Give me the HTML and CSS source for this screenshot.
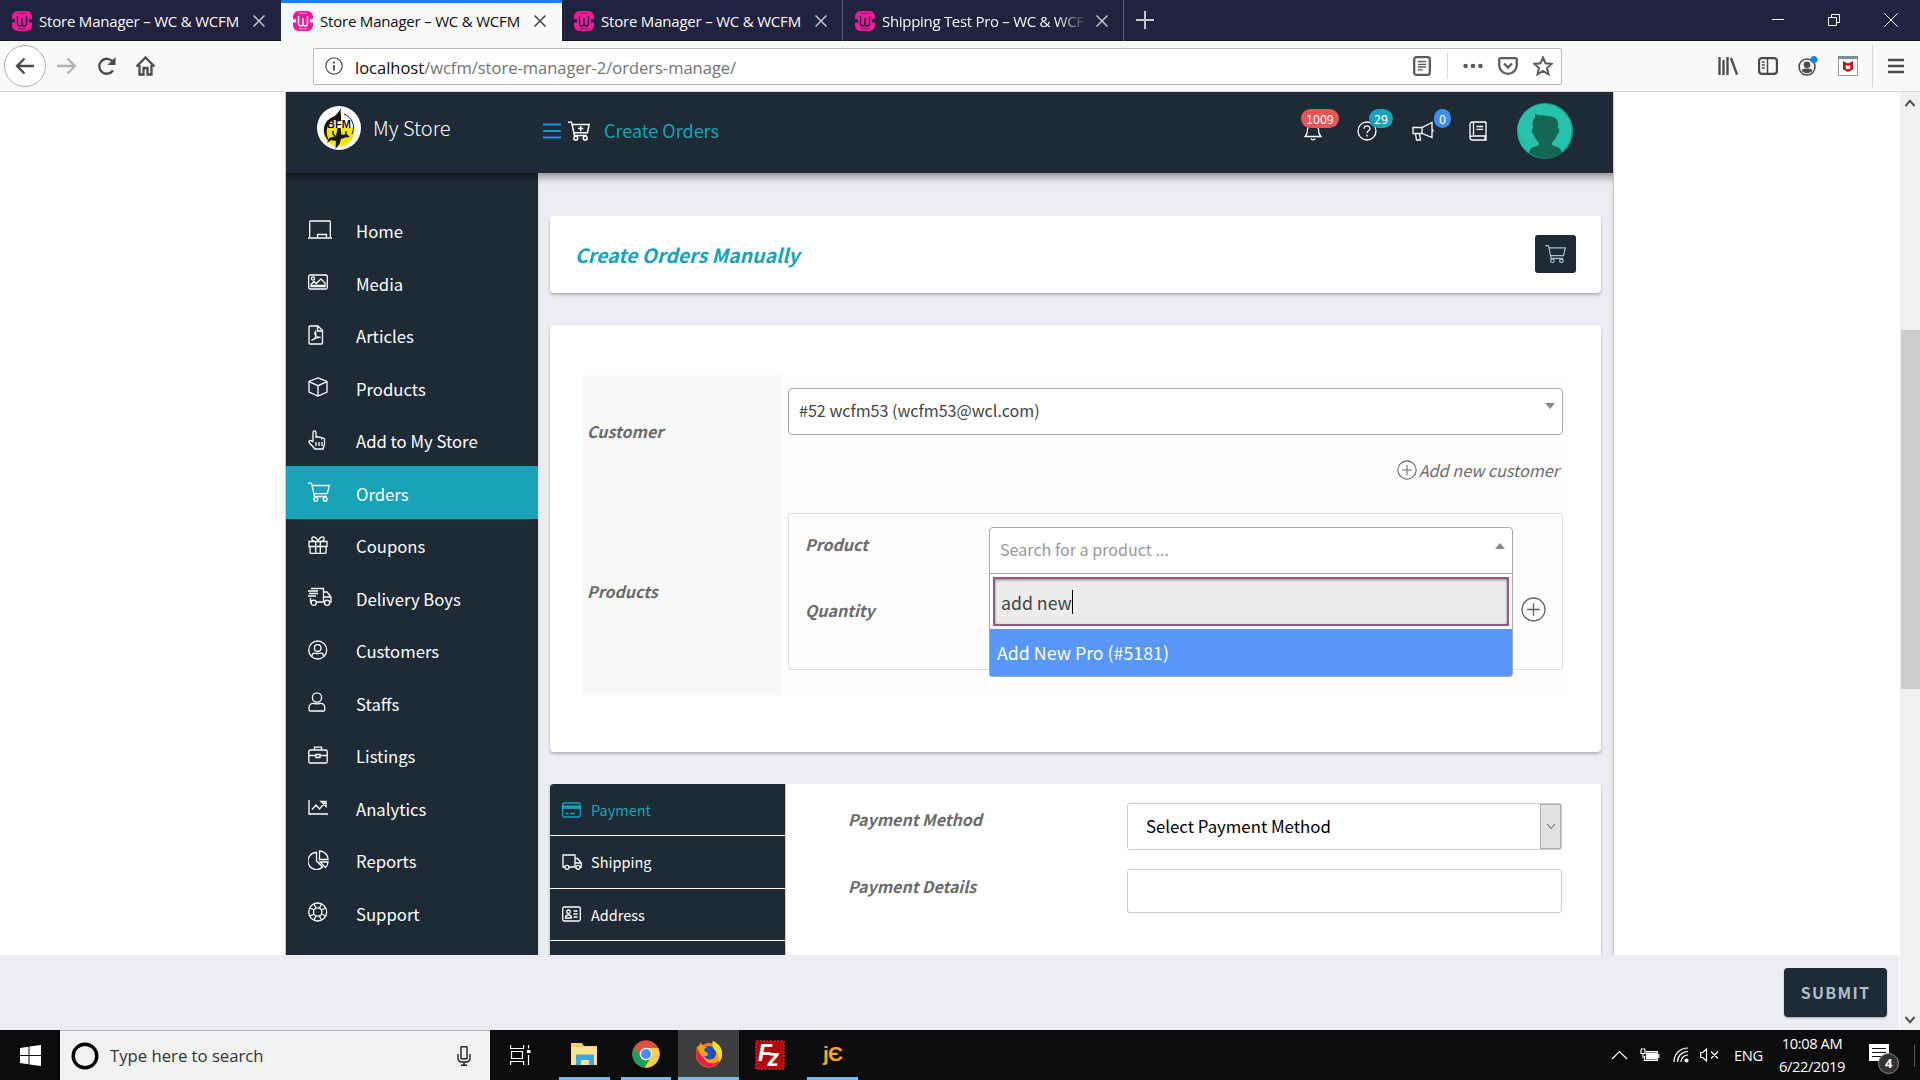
FILE: index.html
```
<!DOCTYPE html>
<html lang="en">
<head>
    <meta charset="UTF-8">
    <title>Store Manager – WC &amp; WCFM</title>
    <link rel="stylesheet" href="styles.css">
</head>
<body>
    <svg class="sprite" width="0" height="0">
        <symbol id="fav" viewBox="0 0 20 20">
            <path d="M6 0h8c4 0 6 3 6 6v2.200h-3V11.500h3V14c0 3-2 6-6 6H6c-4 0-6-3-6-6v-2.500h3V8.200H0V6c0-3 2-6 6-6z" fill="#f0189c"/>
            <path d="M5.500 5v7c0 2 1 3 2.300 3S10 14 10 12V7m0 5c0 2 1 3 2.200 3s2.300-1 2.300-3V5" fill="none" stroke="var(--tab-bg)" stroke-width="1.500"/>
            <path d="M6 2.200h8M6 17.800h8" stroke="var(--tab-bg)" stroke-width=".6"/>
        </symbol>
        <symbol id="cart" viewBox="0 0 22 20">
            <path d="M0 1.200h3.600L6.400 14.500h12.400M4.200 3.500h17L19.400 11.700H6"/>
            <circle cx="7.800" cy="17.200" r="1.900"/><circle cx="17.200" cy="17.200" r="1.900"/>
        </symbol>
        <symbol id="plus-circle" viewBox="0 0 24 24">
            <circle cx="12" cy="12" r="11"/><path d="M12 6v12M6 12h12"/>
        </symbol>
    </svg>

    <!-- browser tabs -->
    <div class="tabs">
        <div class="tab"><svg class="fav"><use href="#fav"/></svg><span class="tab-title">Store Manager – WC &amp; WCFM</span><svg class="close" viewBox="0 0 12 12"><path d="M.5.5l11 11M11.500.5l-11 11"/></svg></div>
        <div class="tab active"><svg class="fav"><use href="#fav"/></svg><span class="tab-title">Store Manager – WC &amp; WCFM</span><svg class="close" viewBox="0 0 12 12"><path d="M.5.5l11 11M11.500.5l-11 11"/></svg></div>
        <div class="tab lined"><svg class="fav"><use href="#fav"/></svg><span class="tab-title">Store Manager – WC &amp; WCFM</span><svg class="close" viewBox="0 0 12 12"><path d="M.5.5l11 11M11.500.5l-11 11"/></svg></div>
        <div class="tab lined"><svg class="fav"><use href="#fav"/></svg><span class="tab-title faded">Shipping Test Pro – WC &amp; WCF</span><svg class="close" viewBox="0 0 12 12"><path d="M.5.5l11 11M11.500.5l-11 11"/></svg></div>
        <svg class="new-tab" width="18" height="18" viewBox="0 0 18 18"><path d="M9 0v18M0 9h18"/></svg>
        <div class="win-btns">
            <svg width="12" height="12" viewBox="0 0 12 12"><path d="M0 5.500h12"/></svg>
            <svg width="12" height="12" viewBox="0 0 12 12"><path d="M.5 3.500h8v8h-8zM3.500 3.500v-3h8v8h-3"/></svg>
            <svg width="14" height="14" viewBox="0 0 14 14"><path d="M.5.5l13 13M13.500.5l-13 13"/></svg>
        </div>
    </div>

    <!-- browser toolbar -->
    <div class="toolbar">
        <div class="back"><svg width="20" height="18" viewBox="0 0 20 18"><path d="M19 9H2M9.500 1.500L2 9l7.500 7.500"/></svg></div>
        <svg class="nav-ic forward" width="21" height="18" viewBox="0 0 21 18"><path d="M1 9h17M11.500 1.500L19 9l-7.500 7.500"/></svg>
        <svg class="nav-ic reload" width="20" height="19" viewBox="0 0 20 19"><path d="M16 13.500A7.500 7.500 0 1 1 16 5"/><path d="M18.500 0v8h-8z" fill="#4b4b4f" stroke="none"/></svg>
        <svg class="nav-ic home" width="21" height="20" viewBox="0 0 21 20"><path d="M1.500 10.500l9-9 9 9M4.500 9v9.500h4V12h4v6.500h4V9"/></svg>
        <div class="urlbar">
            <svg class="info" width="18" height="18" viewBox="0 0 18 18"><circle cx="9" cy="9" r="8.200"/><path d="M9 8v5.500M9 4.500v2" stroke-width="2"/></svg>
            <span class="url"><b>localhost</b>/wcfm/store-manager-2/orders-manage/</span>
            <svg width="18" height="20" viewBox="0 0 18 20"><rect x="1.200" y="1.200" width="15.600" height="17.600" rx="2"/><path d="M5 5.500h8M5 8.300h8M5 11h8M5 13.800h5" stroke-width="1.300"/></svg>
            <i class="url-sep"></i>
            <svg class="dots" width="20" height="6" viewBox="0 0 20 6"><circle cx="2.600" cy="3" r="2.300"/><circle cx="10" cy="3" r="2.300"/><circle cx="17.400" cy="3" r="2.300"/></svg>
            <svg class="pocket" width="20" height="18" viewBox="0 0 20 18"><path d="M2.500 1.200h15q1.300 0 1.300 1.300V8c0 5-4 8.800-8.800 8.800S1.200 13 1.200 8V2.500q0-1.300 1.300-1.300zM6 6.500l4 4 4-4"/></svg>
            <svg class="star" width="20" height="20" viewBox="0 0 20 20"><path d="M10 1.500l2.500 5.800 6.200.6-4.700 4.100 1.500 6.300L10 15l-5.500 3.300L6 12 1.300 7.900l6.200-.6z"/></svg>
        </div>
        <div class="tools">
            <svg width="20" height="18" viewBox="0 0 20 18"><path d="M1.500 0v18M5.500 3v15M9.500 0v18M13 1l6 16.500"/></svg>
            <svg width="20" height="18" viewBox="0 0 20 18"><rect x="1" y="1.200" width="18" height="15.600" rx="3"/><path d="M9.500 1v16M3.800 5h3M3.800 8h3M3.800 11h3" stroke-width="1.500"/></svg>
            <svg class="account" width="20" height="20" viewBox="0 0 20 20"><circle cx="9" cy="11" r="8" stroke-width="1.500"/><circle cx="9" cy="8.700" r="3.300" fill="#4b4b4f" stroke="none"/><path d="M3.500 14.500c1-1.500 3-2 5.500-2s4.500.5 5.500 2c-3 3.500-8 3.500-11 0z" fill="#4b4b4f" stroke="none"/><circle cx="16" cy="3.500" r="3.500" fill="#0a84ff" stroke="none"/></svg>
            <svg width="20" height="20" viewBox="0 0 20 20"><rect x=".5" y=".5" width="19" height="19" fill="#fff" stroke="#9a9a9a" stroke-width="1"/><path d="M0 1.500h20" stroke="#78909c" stroke-width="3"/><path d="M5 5l5 2.500L15 5v8.500L10 16l-5-2.500z" fill="#c01818" stroke="none"/><path d="M7.800 9v3.500l2.200 1 2.200-1V9L10 10z" fill="#fff" stroke="none"/></svg>
            <i class="tool-sep"></i>
            <svg class="menu-btn" width="16" height="16" viewBox="0 0 16 16"><path d="M0 2h16M0 8h16M0 14h16"/></svg>
        </div>
    </div>

    <div class="viewport">
        <div class="page">
            <div class="frame">
                <header class="store-head">
                    <div class="brand">
                        <svg width="44" height="44" viewBox="0 0 44 44"><circle cx="22" cy="22" r="22" fill="#fff"/><circle cx="22" cy="25" r="15.500" fill="#f4e800"/><path d="M6.500 21.500a15.500 15 0 0 1 31 0z" fill="#fff"/><path d="M13 36C4 29 5 15 16 11c4-2 5-5 9-10-3 5 0 7-1 13h-5c-9 0-12 13-6 22z" fill="#1c1410"/><path d="M27 8c8 3 12 12 8 20" fill="none" stroke="#1c1410"/><path d="M20.500 22h3l1 7 5-1 3.500 3-5 .5-4 1.500-1.500 5-4 5 .5-8-5-1-4 3 2-5 7-2z" fill="#1c1410"/><path d="M16 25v3l3 3M29 25v4l-4 3" stroke="#1c1410" stroke-width="1.500" fill="none"/><text class="logo-text" x="22" y="22" text-anchor="middle">BFM</text></svg>
                        <span>My Store</span>
                    </div>
                    <div class="crumb">
                        <svg class="burger" width="18" height="16" viewBox="0 0 18 16"><path d="M0 1.500h18M0 8h18M0 14.500h18"/></svg>
                        <svg class="cart-plus ln" width="22" height="20" viewBox="0 0 22 20"><use href="#cart"/><path d="M12.700 5v5.200M10 7.600h5.400"/></svg>
                        <span>Create Orders</span>
                    </div>
                    <div class="head-icons">
                        <div class="hi bell"><svg class="ln" width="18" height="20" viewBox="0 0 18 20"><path d="M1.200 15.500c2-2 2.300-3 2.300-7a5.500 5.500 0 0 1 11 0c0 4 .3 5 2.300 7zM7 17.500c.6 1.800 3.400 1.800 4 0M9 1v2"/></svg><b class="badge red">1009</b></div>
                        <div class="hi help"><svg class="ln" width="20" height="20" viewBox="0 0 20 20"><circle cx="10" cy="10" r="9"/><path d="M7 7.800c0-4 6.200-3.600 6 0-.1 2-3 2-3 4.200M10 13.500v2"/></svg><b class="badge teal">29</b></div>
                        <div class="hi horn"><svg class="ln" width="22" height="20" viewBox="0 0 22 20"><path d="M1 6.500h9l10-5v15l-10-4H1zM10 6.500v6M3.500 12.500l1 6.500h4l-1-6.500M20 8c1.500.5 1.500 2.500 0 3"/></svg><b class="badge blue">0</b></div>
                        <div class="hi book"><svg class="ln" width="18" height="20" viewBox="0 0 18 20"><path d="M17 1H3.500Q1 1 1 3.500v13Q1 19 3.500 19H17v-4H3.500Q1 15 1 17M17 1v14M4.500 1v14M7.500 5.500h6.500M7.500 8.300h6.500M16 15v4"/></svg></div>
                        <svg class="avatar" width="56" height="56" viewBox="0 0 56 56"><circle cx="28" cy="28" r="28" fill="#1f9d8b"/><circle cx="27.500" cy="28" r="27" fill="#27c1ac"/><path d="M18 10c1 4 14 1 20 5 4 3 3 7 3 10 2 1 1 6-1 7-1 5-5 6-5 9 0 2 4 2 7 4 2 1 3 4 3 5a28 28 0 0 1-33 0c0-1 1-4 3-5 3-2 7-2 7-4 0-3-4-4-5-9-2-1-3-6-1-7-1-6 0-8 2-10z" fill="#166655"/></svg>
                    </div>
                </header>

                <div class="columns">
                    <nav class="side">
                        <a><svg class="ln" width="24" height="20" viewBox="0 0 24 20"><path d="M1.700 17V1.800q0-.8.8-.8h19q.8 0 .8.800V17M0 18h24M9.500 18v-3.500h9V18"/></svg>Home</a>
                        <a><svg class="ln" width="24" height="20" viewBox="0 0 24 20"><rect x=".7" y="3" width="18.600" height="14" rx="1.500"/><circle cx="5" cy="6.500" r="1.600"/><path d="M3 14.500v-2l3-3 2.200 2L13 7l4 4v3.500zM3 13.500h14"/></svg>Media</a>
                        <a><svg class="ln" width="24" height="20" viewBox="0 0 24 20"><path d="M1 2q0-1 1-1h8l4.500 4.500V18q0 1-1 1H2q-1 0-1-1zM9.500 1v5h5M3.500 15.500c4-2 5-6 4-9-2 3 1 6 5 6-3-.5-6 1-9 3z"/></svg>Articles</a>
                        <a><svg class="ln" width="24" height="20" viewBox="0 0 24 20"><path d="M10 .9l9 3.600v10.500l-9 4-9-4V4.500zM1 4.700l9 4 9-4M10 8.700V19"/></svg>Products</a>
                        <a><svg class="ln" width="24" height="20" viewBox="0 0 24 20"><path d="M5 12V2.400c0-2 3-2 3 0V8c0-1.800 3-1.500 3 0 0-1.500 2.800-1 2.800.5 1-1 2.700-.5 2.700 1V14l-1.500 5H7l-5.500-6c-1.500-2 1-3.500 2-2L5 12M8 12v4M11 12v4M14 12v4"/></svg>Add to My Store</a>
                        <a class="on"><svg class="ln" width="24" height="20" viewBox="0 0 24 20"><use href="#cart" width="22" height="20"/></svg>Orders</a>
                        <a><svg class="ln" width="24" height="20" viewBox="0 0 24 20"><path d="M1 6.500h18v5H1zM2 11.500h16v6q0 .8-.8.800H2.800q-.8 0-.8-.8zM7.700 6.500v11.800M12.300 6.500v11.800M10 6C7 0 3 1.500 4 4.500c.3 1.500 2 2 3 2M10 6c3-6 7-4.500 6-1.500-.3 1.500-2 2-3 2"/></svg>Coupons</a>
                        <a><svg class="ln" width="24" height="20" viewBox="0 0 24 20"><path d="M3 1.500h12.500V15H8M2.500 11v4h1M0 4h10M1 6.500h9M0 9h8M15.500 5h3.500l4 5v5h-2M15.500 15h2M16 10h7"/><circle cx="5.700" cy="15.700" r="2.600"/><circle cx="19" cy="15.700" r="2.600"/></svg>Delivery Boys</a>
                        <a><svg class="ln" width="24" height="20" viewBox="0 0 24 20"><circle cx="9.700" cy="10" r="9"/><circle cx="9.700" cy="8" r="3.300"/><path d="M4 16.500c0-5 3-3 5.700-3s5.700-2 5.700 3"/></svg>Customers</a>
                        <a><svg class="ln" width="24" height="20" viewBox="0 0 24 20"><circle cx="9" cy="5.500" r="4.600"/><path d="M2.500 19h13q1.300 0 1.300-1.300V16c0-4-3-5-5-4.500-2 .5-3 .5-5.300 0C4 11 1 12 1 16v1.700Q1 19 2.500 19z"/></svg>Staffs</a>
                        <a><svg class="ln" width="24" height="20" viewBox="0 0 24 20"><rect x=".8" y="5" width="18.400" height="13" rx="1.500"/><path d="M6.500 5V2.200h7V5M1 10.500h7M12 10.500h7M8 9.500h4v3H8z"/></svg>Listings</a>
                        <a><svg class="ln" width="24" height="20" viewBox="0 0 24 20"><path d="M1 3v14h19M4 12.500L8 8l3.500 4L17 5.500M13 4.500h5v5z"/></svg>Analytics</a>
                        <a><svg class="ln" width="24" height="20" viewBox="0 0 24 20"><path d="M8.500 2.500a8.500 8.500 0 1 0 6 14.500L8.500 11zM11.500 1v8.500H20C20 5 16.500 1 11.500 1zM12 12h8c0 2-1 4-2.500 5.500z"/></svg>Reports</a>
                        <a><svg class="ln" width="24" height="20" viewBox="0 0 24 20"><circle cx="9.700" cy="10" r="9"/><circle cx="9.700" cy="10" r="4.200"/><path d="M2 6l4 2M6 2l2 4M17.500 6l-4 2M13.500 2l-2 4M2 14l4-2M6 18l2-4M17.500 14l-4-2M13.500 18l-2-4"/></svg>Support</a>
                    </nav>

                    <main class="content">
                        <section class="card title-card">
                            <h2>Create Orders Manually</h2>
                            <a class="cart-btn"><svg class="ln" width="21" height="20" viewBox="0 0 22 20"><use href="#cart"/></svg></a>
                        </section>

                        <section class="card order-card">
                            <div class="grid">
                                <div class="label">Customer</div>
                                <div class="cell customer">
                                    <div class="select2"><span>#52 wcfm53 (wcfm53@wcl.com)</span><i class="caret down"></i></div>
                                    <div class="add-new"><svg class="ln" width="20" height="20"><use href="#plus-circle"/></svg><span>Add new customer</span></div>
                                </div>
                                <div class="label">Products</div>
                                <div class="cell">
                                    <div class="multi">
                                        <div class="multi-labels"><span>Product</span><span>Quantity</span></div>
                                        <div class="picker">
                                            <div class="select2 open"><span class="ph">Search for a product ...</span><i class="caret up"></i></div>
                                            <div class="dropdown">
                                                <div class="search"><span>add new</span><i class="cursor"></i></div>
                                                <div class="option">Add New Pro (#5181)</div>
                                            </div>
                                        </div>
                                        <svg class="add-row ln" width="25" height="25"><use href="#plus-circle"/></svg>
                                    </div>
                                </div>
                            </div>
                        </section>

                        <section class="card pay-card">
                            <div class="vtabs">
                                <a class="cur"><svg class="ln" width="20" height="16" viewBox="0 0 20 16"><rect x=".7" y="1" width="17.600" height="14" rx="1.500"/><path d="M1 5.200h17" stroke-width="3.500"/><path d="M3.500 11.500h3M8 11.500h5"/></svg>Payment</a>
                                <a><svg class="ln" width="20" height="16" viewBox="0 0 20 16"><path d="M3 13H1V1h12v12H7M13 4.500h2.500L19.300 9v4H18M13 9h6"/><circle cx="5" cy="13.300" r="2"/><circle cx="16" cy="13.300" r="2"/></svg>Shipping</a>
                                <a><svg class="ln" width="20" height="16" viewBox="0 0 20 16"><rect x=".7" y="1" width="17.600" height="14" rx="1.500"/><circle cx="6.500" cy="5.800" r="1.800"/><path d="M3.500 12c0-4 6-4 6 0zM11.500 5h4M11.500 8h4M11.500 11h4"/></svg>Address</a>
                                <a></a>
                            </div>
                            <div class="pay-form">
                                <div class="row"><label>Payment Method</label><div class="native"><span>Select Payment Method</span><i><svg width="10" height="7" viewBox="0 0 10 7"><path d="M1 1l4 4.500L9 1"/></svg></i></div></div>
                                <div class="row second"><label>Payment Details</label><div class="input"></div></div>
                            </div>
                        </section>
                    </main>
                </div>
            </div>
            <div class="submit-bar"><button class="submit">SUBMIT</button></div>
        </div>
        <div class="scrollbar">
            <svg width="12" height="8" viewBox="0 0 12 8"><path d="M1.500 7L6 1.800 10.500 7"/></svg>
            <div class="track"><div class="thumb"></div></div>
            <svg width="12" height="8" viewBox="0 0 12 8"><path d="M1.500 1L6 6.200 10.500 1"/></svg>
        </div>
    </div>

    <!-- windows taskbar -->
    <div class="taskbar">
        <div class="start"><svg width="21" height="21" viewBox="0 0 21 21" fill="#fff"><path d="M0 3l8.500-1.200V10H0zM9.500 1.600L21 0v10H9.500zM0 11h8.500v8.200L0 18zM9.500 11H21v10L9.500 19.400z"/></svg></div>
        <div class="win-search">
            <svg width="28" height="28" viewBox="0 0 28 28"><circle cx="14" cy="14" r="11.800" fill="none" stroke="#000" stroke-width="3.400"/></svg>
            <span>Type here to search</span>
            <svg class="mic" width="14" height="20" viewBox="0 0 14 20" fill="none" stroke="#222" stroke-width="1.400"><rect x="4" y=".8" width="6" height="12" rx=".5"/><path d="M1 8v4q0 4 4 4h4q4 0 4-4V8M7 16v3.300M4 19.300h6"/></svg>
        </div>
        <div class="app taskview"><svg width="21" height="20" viewBox="0 0 21 20" fill="none" stroke="#fff" stroke-width="1.200"><path d="M.6 0v3.500h13V0M.6 20v-3.500h13V20M1.500 6.500h11v7h-11zM18.500 0v3.500M18.500 10v10"/><path d="M17 6.500h3.500" stroke-width="3"/></svg></div>
        <div class="app folder run"><svg width="28" height="24" viewBox="0 0 28 24"><path d="M1 1h11l2 3h13v19H1z" fill="#f5cf62"/><path d="M1 5h26v18H1z" fill="#ffe391"/><path d="M6 23V12.500h18V23h-5v-5h-8v5z" fill="#3aa8e6"/></svg></div>
        <div class="app chrome run"><svg width="28" height="28" viewBox="0 0 28 28"><circle cx="14" cy="14" r="13.700" fill="#dd4f41"/><path d="M2.200 7A13.700 13.700 0 0 0 12.700 27.600L20 17 8 17z" fill="#1a9f5a"/><path d="M26.200 8A13.700 13.700 0 0 1 12.500 27.600L20 16 14 8z" fill="#fdce46"/><circle cx="14" cy="14" r="6.300" fill="#f4f4f4"/><circle cx="14" cy="14" r="5" fill="#4c8af5"/></svg></div>
        <div class="app firefox run"><svg width="28" height="28" viewBox="0 0 28 28"><circle cx="14" cy="15" r="12" fill="#ff7a18"/><circle cx="14" cy="13.500" r="7.500" fill="#1c4fbf"/><path d="M2 7c2-1 3-3 4-5 0 3 3 4 6 6-3 0-4 2-1 4 4 1 2 5-2 4 4 6 13 4 12-4C20 8 16 6 18 1c6 3 9 7 9 13a13 13 0 0 1-26 1C1 11 2 9 2 7z" fill="#ff9e13"/><path d="M1 14a13 13 0 0 0 25 5c-5 6-14 6-18-2C5 15 3 12 3 8c-1 2-2 4-2 6z" fill="#e91e50"/><path d="M18 1c6 3 9 7 9 13 0 3-1 6-3 8 0-7-2-10-5-13-2-3-2-5-1-8z" fill="#ffdf2c"/></svg></div>
        <div class="app fz"><svg width="30" height="30" viewBox="0 0 30 30"><rect x="1" y="1" width="28" height="28" fill="#b20a0a" stroke="#c51a1a" stroke-dasharray="2 1.500" stroke-width="2"/><text x="3" y="21" class="fz-text">F</text><text x="12.500" y="26" class="fz-text">z</text></svg></div>
        <div class="app je run"><span>jЄ</span></div>
        <div class="tray">
            <svg class="chev" width="17" height="10" viewBox="0 0 17 10"><path d="M1 9l7.500-7.500L16 9"/></svg>
            <svg class="batt" width="20" height="14" viewBox="0 0 20 14"><path d="M6 3.500h11.500v9H4.500V8" /><path d="M6.500 5h10v6h-10z" fill="#fff"/><path d="M18.800 6v4M1 1.500v4h4v-4M3 5.500V10M1.800 0v2M4.200 0v2"/></svg>
            <svg class="wifi" width="16" height="16" viewBox="0 0 16 16"><path d="M1 15C1 7 7 1 15 1M4.500 15C4.500 9 9 4.500 15 4.500M8 15c0-4 3-7 7-7"/><circle cx="13.500" cy="13.500" r="1.500" fill="#fff"/></svg>
            <svg class="vol" width="19" height="14" viewBox="0 0 19 14"><path d="M.7 4.500h2L6.500 1v12L2.700 9.500h-2zM11 3.500l7 7M18 3.500l-7 7"/></svg>
            <span class="lang">ENG</span>
            <div class="clock"><span>10:08 AM</span><span>6/22/2019</span></div>
            <div class="notif"><svg width="21" height="19" viewBox="0 0 21 19"><path d="M0 0h20v17h-6l-3 2v-2H0z" fill="#fff" stroke="none"/><path d="M3 4.500h14M3 8.500h14M3 12.500h9" stroke="#111"/></svg><b>4</b></div>
        </div>
    </div>
</body>
</html>
```

FILE: styles.css
```
:root {
    --dark: #1e2a35;
    --teal: #18a3b9;
    --bg: #ecedf2;
    --source: "Noto Sans CJK SC", "Noto Sans", sans-serif;
    --ui: "Open Sans", "Noto Sans", sans-serif;
}
* {
    box-sizing: border-box;
}
body {
    margin: 0;
    width: 1920px;
    height: 1080px;
    overflow: hidden;
    background: #fff;
    font-family: var(--source);
    display: flex;
    flex-direction: column;
}
svg {
    display: block;
    flex: none;
}
.sprite {
    position: absolute;
}
.ln {
    fill: none;
    stroke: currentColor;
    stroke-width: 1.3;
}

/* tabs */
.tabs {
    height: 41px;
    flex: none;
    display: flex;
    align-items: center;
    background: #20223f;
    border-bottom: 1px solid #15162e;
    font-family: var(--ui);
}
.tab {
    --tab-bg: #20223f;
    width: 281px;
    height: 41px;
    padding: 2px 15px 0 12px;
    display: flex;
    align-items: center;
    color: #f9f9fa;
    font-size: 15px;
}
.tab.active {
    --tab-bg: #f9f9fa;
    background: #f9f9fa;
    color: #0c0c0d;
    border-top: 3px solid #0a84ff;
    padding-top: 0;
    padding-bottom: 1px;
}
.tab.lined {
    border-right: 1px solid #5b5c73;
}
.fav {
    width: 20px;
    height: 20px;
    margin-right: 7px;
}
.tab-title {
    width: 206px;
    overflow: hidden;
    white-space: nowrap;
    letter-spacing: -0.200px;
    margin-right: 8px;
}
.tab-title.faded {
    letter-spacing: -0.300px;
    -webkit-mask-image: linear-gradient(90deg, #000 85%, transparent 100%);
    mask-image: linear-gradient(90deg, #000 85%, transparent 100%);
}
.close {
    width: 12px;
    height: 12px;
    stroke: #c6c6cf;
    stroke-width: 1.500;
}
.active .close {
    stroke: #444;
}
.new-tab {
    margin-left: 12px;
    stroke: #c6c6cf;
    stroke-width: 2;
}
.win-btns {
    margin-left: auto;
    margin-right: 22px;
    display: flex;
    align-items: center;
    gap: 44px;
    fill: none;
    stroke: #fff;
}

/* toolbar */
.toolbar {
    height: 51px;
    flex: none;
    display: flex;
    align-items: center;
    padding-left: 4px;
    background: #f9f9fa;
    border-bottom: 1px solid #d7d7db;
    fill: none;
    stroke: #4b4b4f;
    stroke-width: 2.300;
}
.back {
    width: 42px;
    height: 42px;
    border: 1px solid #b1b1b3;
    border-radius: 50%;
    background: #fff;
    display: flex;
    align-items: center;
    justify-content: center;
}
.forward {
    margin-left: 10px;
    opacity: .4;
}
.reload {
    margin-left: 20px;
}
.home {
    margin-left: 18px;
}
.urlbar {
    margin-left: 157px;
    width: 1249px;
    height: 37px;
    background: #fff;
    border: 1px solid #bcbcbc;
    border-radius: 2px;
    display: flex;
    align-items: center;
    padding: 0 8px 0 11px;
    font-family: var(--ui);
    font-size: 16.500px;
    stroke: #5b5b5f;
}
.info {
    stroke-width: 1.300;
}
.url {
    margin-left: 12px;
    margin-right: auto;
    padding-top: 2px;
    color: #737373;
}
.url b {
    font-weight: 400;
    color: #0c0c0d;
}
.url-sep {
    width: 1px;
    height: 26px;
    margin: 0 15px 0 16px;
    background: #d7d7db;
}
.dots {
    fill: #5b5b5f;
    stroke: none;
}
.pocket {
    margin-left: 15px;
}
.star {
    margin-left: 15px;
    stroke-width: 2;
}
.tools {
    margin-left: auto;
    display: flex;
    align-items: center;
    gap: 20px;
    padding-right: 16px;
}
.tool-sep {
    width: 1px;
    height: 42px;
    background: #d7d7db;
    margin: 0 -5px 0 -6px;
}
.menu-btn {
    stroke-width: 2.500;
}

/* page */
.viewport {
    height: 938px;
    flex: none;
    display: flex;
}
.page {
    width: 1900px;
    border-right: 1px solid #fff;
    display: flex;
    flex-direction: column;
}
.frame {
    width: 1329px;
    height: 863px;
    flex: none;
    overflow: hidden;
    margin-left: 285px;
    border: 1px solid #c9c9cd;
    border-width: 0 1px;
    background: var(--bg);
}
.store-head {
    height: 81px;
    position: relative;
    background: var(--dark);
    display: flex;
    color: #fff;
}
.brand {
    width: 257px;
    padding: 14px 0 0 31px;
    display: flex;
    gap: 12px;
    font-size: 20px;
    font-weight: 300;
    line-height: 44px;
}
.logo-text {
    font: bold 11px "Liberation Sans", sans-serif;
    fill: #1c1410;
}
.crumb {
    display: flex;
    height: 77px;
    align-items: center;
    font-size: 18px;
    color: var(--teal);
}
.crumb span {
    line-height: 24px;
    margin-top: -1px;
}
.burger {
    stroke: #0d9be0;
    stroke-width: 2;
}
.cart-plus {
    margin: 0 14px 0 7px;
    color: #fff;
    stroke-width: 1.500;
}
.head-icons {
    margin-left: auto;
    display: flex;
    align-items: center;
    height: 78px;
    padding-right: 40px;
}
.hi {
    position: relative;
}
.bell { margin-right: 35px; }
.help { margin-right: 35px; }
.horn { margin-right: 35px; }
.book { margin-right: 30px; }
.badge {
    position: absolute;
    top: -12px;
    height: 19px;
    border-radius: 10px;
    padding: 0 5px;
    font-weight: 400;
    font-size: 12.500px;
    line-height: 19px;
}
.badge.red { left: -3px; background: #e85656; }
.badge.teal { left: 12px; background: #18a3b9; }
.badge.blue { left: 22px; background: #3f8ff0; }

.columns {
    display: flex;
    height: 782px;
}
.side {
    width: 252px;
    padding-top: 30.500px;
    background: var(--dark);
    color: #fff;
    box-shadow: inset 0 9px 9px -7px rgba(0, 0, 0, .6);
}
.side a {
    display: flex;
    align-items: center;
    gap: 24px;
    height: 52.500px;
    padding: 3px 0 0 22px;
    font-size: 16.700px;
}
.side svg {
    margin-top: -3px;
}
.side a.on {
    background: var(--teal);
}
.content {
    flex: 1;
    padding: 43px 12px 0;
    box-shadow: inset 0 9px 9px -5px rgba(0, 0, 0, .4);
}
.card {
    width: 1051px;
    background: #fff;
    border-radius: 4px;
    box-shadow: 0 2px 3px rgba(0, 0, 0, .25);
}
.title-card {
    height: 77px;
    margin-bottom: 32px;
    padding: 0 25px 2px 25px;
    display: flex;
    align-items: center;
    justify-content: space-between;
}
h2 {
    margin: 2px 0 0;
    font-size: 19.500px;
    font-style: italic;
    font-weight: 600;
    color: var(--teal);
}
.cart-btn {
    width: 41px;
    height: 38px;
    display: flex;
    align-items: center;
    justify-content: center;
    background: var(--dark);
    color: #b0bec5;
    border-radius: 3px;
}
.order-card {
    height: 427px;
    margin-bottom: 32px;
    padding: 50px 32px 0 32px;
}
.grid {
    display: grid;
    grid-template-columns: 200px 1fr;
    grid-template-rows: 114px 206px;
    background: #fdfdfd;
}
.label {
    display: flex;
    align-items: center;
    padding: 0 0 2px 5px;
    background: #f8f8f8;
}
.label, .multi-labels, .pay-form label {
    font-size: 16px;
    font-style: italic;
    font-weight: 600;
    color: #6b6b6b;
}
.cell {
    padding: 13px 7px 0 6px;
}
.select2 {
    height: 47px;
    border: 1px solid #aaa;
    border-radius: 4px;
    background: #fff;
    display: flex;
    justify-content: space-between;
    padding: 0 7px 4px 10px;
    align-items: center;
    font-size: 16.100px;
    color: #444;
}
.select2 .ph {
    color: #999;
    margin-top: 1px;
}
.caret {
    border: 5px solid transparent;
    border-width: 0 5px;
}
.caret.down {
    border-top: 6px solid #888;
    margin-top: -7px;
}
.caret.up {
    border-bottom: 6px solid #888;
    margin-top: -6px;
}
.add-new {
    display: flex;
    justify-content: flex-end;
    align-items: center;
    gap: 2px;
    margin-top: 23px;
    padding-right: 4px;
    height: 24px;
    font-size: 16.200px;
    font-style: italic;
    color: #6b6b6b;
}
.multi {
    display: flex;
    height: 157px;
    margin-top: 11px;
    padding: 13px 16px 0;
    border: 1px solid #ddd;
    border-radius: 3px;
}
.multi-labels {
    width: 184px;
    display: flex;
    flex-direction: column;
    gap: 42px;
    line-height: 24px;
    padding-top: 5px;
}
.picker {
    width: 524px;
    position: relative;
}
.select2.open {
    border-radius: 4px 4px 0 0;
}
.dropdown {
    position: absolute;
    top: 47px;
    left: 0;
    width: 524px;
    height: 103px;
    border: 1px solid #aaa;
    border-top: 0;
    border-radius: 0 0 4px 4px;
    background: #fff;
}
.search {
    height: 49px;
    margin: 3px 3px;
    padding: 0 6px;
    display: flex;
    align-items: center;
    border: 2px solid #96588a;
    background: #ececec;
    box-shadow: inset 0 1px 3px #888;
    font-size: 17.700px;
    color: #43454b;
}
.cursor {
    width: 1px;
    height: 24px;
    background: #000;
}
.option {
    height: 47px;
    padding-left: 7px;
    line-height: 47px;
    background: #5897fb;
    color: #fff;
    font-size: 17.800px;
}
.add-row {
    margin: 70px 0 0 8px;
    color: #666;
}
.pay-card {
    display: flex;
    height: 300px;
}
.vtabs {
    width: 236px;
    background: var(--dark);
    border-right: 1px solid #ccc;
    border-radius: 4px 0 0;
    color: #fff;
}
.vtabs a {
    display: flex;
    align-items: center;
    gap: 9px;
    height: 52.300px;
    padding-left: 12px;
    border-bottom: 1px solid #fff;
    font-size: 14.500px;
}
.vtabs .cur {
    color: var(--teal);
}
.pay-form {
    flex: 1;
    padding: 19px 39px 0 62px;
}
.row {
    display: flex;
    justify-content: space-between;
}
.row label {
    line-height: 24px;
    padding-top: 4px;
}
.row.second label {
    padding-top: 5px;
}
.second {
    margin-top: 19px;
}
.native, .input {
    width: 435px;
    height: 47px;
    border: 1px solid #ccc;
    border-radius: 3px;
}
.native {
    display: flex;
    justify-content: space-between;
    align-items: center;
    padding-left: 18px;
    font-size: 16.800px;
    color: #000;
}
.native span {
    margin-top: -2px;
}
.native i {
    width: 21px;
    height: 45px;
    border: 1px solid #adadad;
    background: #e1e1e1;
    display: flex;
    align-items: center;
    justify-content: center;
    fill: none;
    stroke: #555;
}
.input {
    height: 44px;
}
.submit-bar {
    height: 75px;
    display: flex;
    justify-content: flex-end;
    align-items: center;
    padding-right: 12px;
    background: var(--bg);
}
.submit {
    width: 103px;
    height: 49px;
    border: 0;
    border-radius: 4px;
    background: var(--dark);
    color: #b0bec5;
    font: 700 16px/49px var(--source);
    letter-spacing: 1.300px;
    padding: 0;
    box-shadow: 0 1px 2px rgba(0, 0, 0, .3);
}
.scrollbar {
    width: 20px;
    padding: 7px 0 6px;
    display: flex;
    flex-direction: column;
    align-items: center;
    background: #f0f0f0;
    fill: none;
    stroke: #505050;
    stroke-width: 2;
}
.track {
    flex: 1;
    width: 19px;
    padding-top: 223px;
}
.thumb {
    height: 359px;
    background: #cdcdcd;
}

/* taskbar */
.taskbar {
    flex: 1;
    display: flex;
    background: #0c0c0c;
    font-family: var(--ui);
    color: #fff;
}
.start {
    width: 60px;
    display: flex;
    align-items: center;
    justify-content: center;
}
.win-search {
    width: 430px;
    display: flex;
    align-items: center;
    padding: 0 19px 0 11px;
    background: #f2f2f2;
    border-top: 1px solid #b5b5b9;
    color: #333;
    font-size: 16.700px;
}
.win-search span {
    margin: 0 auto 0 11px;
}
.app {
    width: 61px;
    height: 50px;
    display: flex;
    align-items: center;
    justify-content: center;
}
.run {
    border-bottom: 3px solid #76b9ed;
}
.folder {
    width: 51px;
    margin-left: 8px;
    padding-right: 2px;
}
.chrome {
    width: 50px;
    margin-left: 11px;
}
.firefox {
    margin-left: 7px;
    background: #3d3d3d;
}
.je {
    width: 51px;
    margin-left: 7px;
    font: bold 21px/40px "Liberation Sans", sans-serif;
    letter-spacing: -1px;
    color: #f5a623;
}
.fz-text {
    font: italic bold 23px "Liberation Sans", sans-serif;
    fill: #fff;
}
.tray {
    margin-left: auto;
    display: flex;
    align-items: center;
    padding-right: 5px;
    fill: none;
    stroke: #fff;
    stroke-width: 1.200;
    font-size: 14.700px;
    letter-spacing: -.4px;
}
.batt { margin-left: 12px; }
.wifi { margin-left: 13px; }
.vol { margin-left: 11px; }
.lang { margin-left: 15px; width: 30px; }
.clock {
    width: 76px;
    margin-left: 10px;
    display: flex;
    flex-direction: column;
    align-items: center;
    line-height: 23px;
}
.notif {
    position: relative;
    width: 46px;
    margin-left: 19px;
    padding-bottom: 4px;
    border-right: 1px solid #555;
}
.notif b {
    position: absolute;
    left: 9px;
    top: 9px;
    width: 21px;
    height: 21px;
    border: 1px solid #888;
    border-radius: 50%;
    background: #333;
    font-size: 13px;
    line-height: 18px;
    text-align: center;
}
```
